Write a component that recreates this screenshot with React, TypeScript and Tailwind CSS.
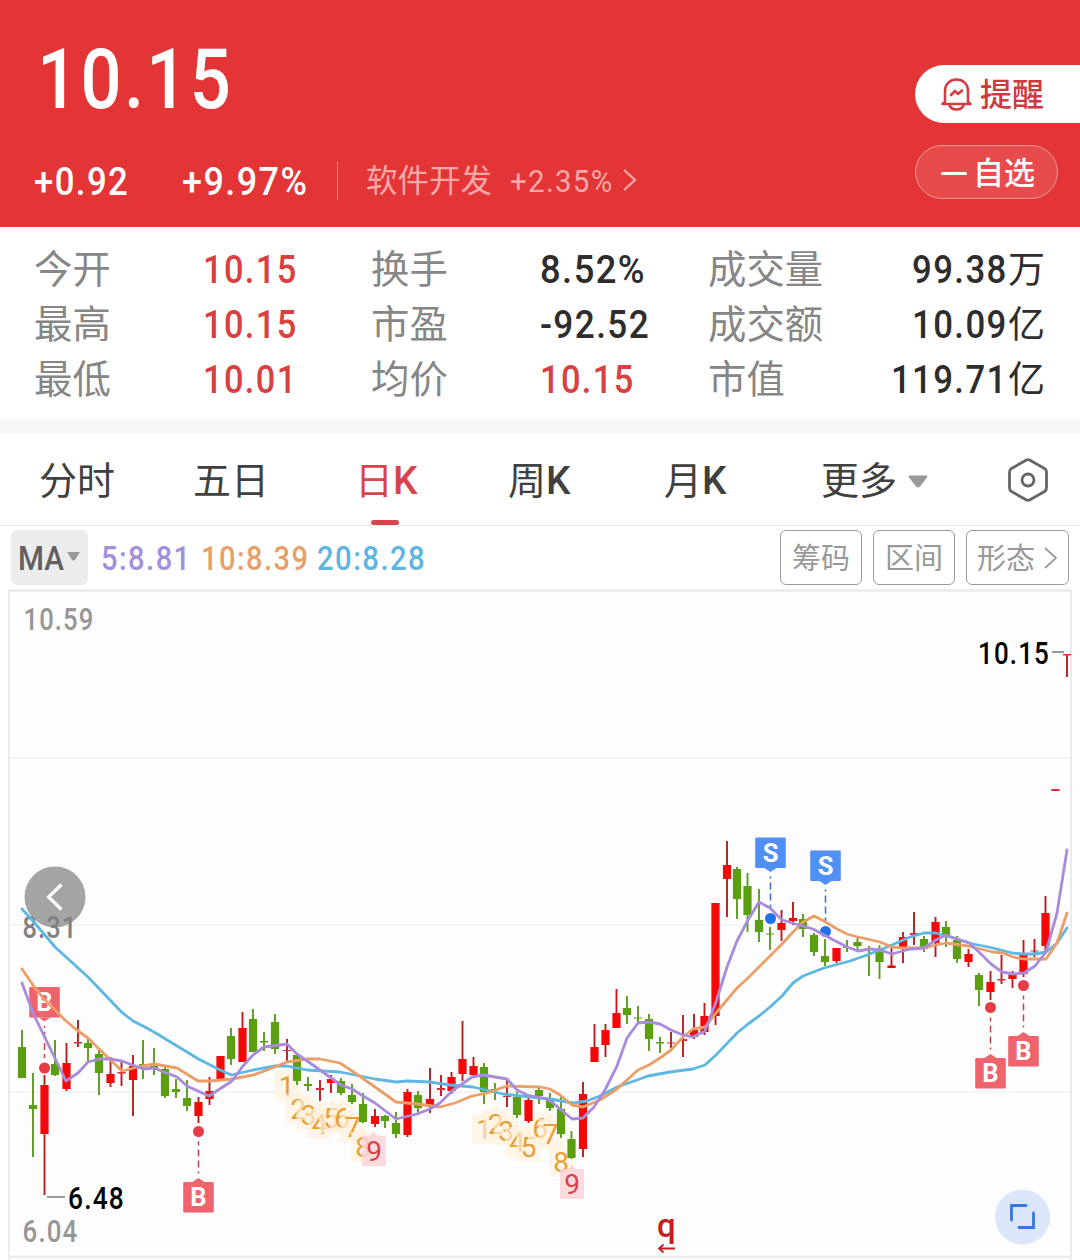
import React from "react";

type Candle = [number, number, number, number, number, 0 | 1];
type Point = [number, number];

const UP = 1;
const DOWN = 0;

// x, high, body top, body bottom, low, direction
const candles: Candle[] = [
  [22, 1030, 1047, 1078, 1078, DOWN], [33, 1073, 1105, 1109, 1157, DOWN], [44.5, 1075, 1085, 1134, 1195, UP],
  [55, 1040, 1064, 1075, 1076, DOWN], [66.5, 1043, 1063, 1089, 1091, UP], [78, 1020, 1042, 1043.5, 1047, UP],
  [88, 1039, 1043, 1048, 1061, DOWN], [99, 1049, 1054, 1073, 1095, DOWN], [110.5, 1057, 1074, 1083, 1087, UP],
  [121.5, 1062, 1072, 1073.5, 1086, UP], [133, 1055, 1066, 1080, 1116, UP], [143, 1040, 1064, 1066, 1079, DOWN],
  [154, 1048, 1066, 1068, 1075, DOWN], [165, 1067, 1069, 1096, 1098, DOWN], [176, 1079, 1089, 1092, 1098, DOWN],
  [187, 1080, 1098, 1106, 1111, DOWN], [198.5, 1097, 1102, 1116, 1123, UP], [209.5, 1077, 1091, 1099, 1105, UP],
  [220.5, 1056, 1056, 1079, 1079, UP], [231, 1028, 1036, 1059, 1065, DOWN], [242.5, 1012, 1028, 1062, 1062, UP],
  [253, 1009, 1019, 1052, 1052, DOWN], [264, 1032, 1041, 1042.5, 1051, DOWN], [275, 1014, 1022, 1049, 1054, DOWN],
  [287, 1039, 1050, 1051, 1061, UP], [297, 1053, 1055, 1081, 1085, DOWN], [308, 1077, 1084, 1086, 1091, DOWN],
  [320, 1080, 1088, 1090, 1101, UP], [331, 1075, 1079, 1083, 1093, UP], [341, 1078, 1081, 1093, 1095, DOWN],
  [352, 1084, 1095, 1102, 1104, DOWN], [363, 1093, 1104, 1122, 1123, DOWN], [375, 1109, 1116, 1124, 1127, UP],
  [385, 1115, 1116, 1121, 1128, DOWN], [396, 1112, 1123, 1134, 1138, DOWN], [407.5, 1089, 1092, 1135, 1137, UP],
  [418, 1091, 1095, 1108, 1114, DOWN], [430, 1068, 1099, 1107, 1113, UP], [441, 1075, 1088, 1090, 1096, UP],
  [451.5, 1072, 1077, 1091, 1094, UP], [462.5, 1021, 1059, 1074, 1081, UP], [473.5, 1057, 1066, 1075, 1077, UP],
  [484, 1063, 1067, 1092, 1104, DOWN], [495, 1083, 1089, 1090, 1100, DOWN], [507, 1078, 1096, 1097, 1107, UP],
  [517, 1092, 1097, 1115, 1118, DOWN], [528.5, 1098, 1100, 1121, 1123, UP], [539, 1088, 1090, 1096, 1104, DOWN],
  [550, 1093, 1098, 1108, 1111, DOWN], [561, 1097, 1109, 1134, 1138, DOWN], [571.5, 1131, 1139, 1158, 1159, DOWN],
  [583, 1082, 1094, 1149, 1157, UP], [594.5, 1024, 1047, 1062, 1062, UP], [605.5, 1024, 1030, 1045, 1057, UP],
  [616.5, 989, 1013, 1028, 1028, UP], [627, 996, 1008, 1015, 1024, DOWN], [638, 1006, 1017.5, 1018.5, 1023, DOWN],
  [649, 1014, 1019, 1039, 1051, DOWN], [660, 1037, 1042, 1043.5, 1053, DOWN], [671, 1032, 1042.5, 1043.5, 1048, UP],
  [683, 1015, 1039, 1041, 1057, UP], [694, 1014, 1030, 1037, 1039, UP], [704.5, 1003, 1016, 1032, 1035, UP],
  [715.5, 903, 903, 1016, 1025, UP], [727, 841, 865, 879, 917, UP], [737, 867, 869, 899, 919, DOWN],
  [747.5, 873, 886, 915, 932, DOWN], [759, 889, 920, 932, 942, DOWN], [770, 927, 933.5, 934.5, 950, DOWN],
  [781.5, 910, 923, 930, 941, UP], [793, 902, 918, 921, 925, UP], [803, 914, 919, 929, 937, DOWN],
  [814, 933, 935, 952, 956, DOWN], [825, 939, 956, 962, 966, DOWN], [836.5, 948, 948, 961, 963, UP],
  [847, 940, 947, 948, 952, DOWN], [857.5, 938, 942, 946, 950, DOWN], [869, 946, 948, 949, 976, DOWN],
  [879.5, 945, 952, 962, 979, DOWN], [891.5, 948, 965.5, 968, 968, UP], [903, 932, 937, 949, 963, UP],
  [914, 912, 933, 935, 945, UP], [924, 936, 939, 949, 952, DOWN], [935.5, 917, 922, 943, 957, UP],
  [946, 921, 927, 937, 947, DOWN], [957, 936, 940, 959, 963, DOWN], [968.5, 949, 954, 962, 967, UP],
  [979, 973, 975, 990, 1006, DOWN], [990.5, 971, 982, 992, 1000, UP], [1001.5, 955, 979, 980.5, 984, UP],
  [1012.5, 971, 975, 979, 988, UP], [1023.5, 940, 955, 974, 977, UP], [1034.5, 939, 950.5, 951.5, 957, UP],
  [1045.5, 896, 913, 946, 952, UP], [1055.5, 789, 789, 791, 791, UP], [1067, 654, 654, 655.5, 677, UP],
];

const ma20: Point[] = [
  [22, 909], [33, 921], [55, 947], [88, 977], [121.5, 1012], [133, 1021], [143, 1026], [154, 1032], [198.5, 1059],
  [220, 1070], [231.5, 1075], [253, 1070], [275, 1066], [287, 1066], [307, 1070], [340, 1072], [375, 1079], [396, 1082],
  [407, 1081], [430, 1082], [450, 1085], [473, 1087], [503, 1094], [530, 1097], [550, 1099], [573, 1103], [587, 1101],
  [600, 1096], [617, 1087], [637, 1080], [648, 1076], [670, 1072], [693, 1069], [705, 1065], [716, 1055], [737, 1033],
  [748, 1024], [759, 1016], [770, 1007], [782, 996], [793, 983], [803, 976], [824, 968], [850, 961], [867, 955],
  [880, 950], [892, 945], [910, 937], [924, 933], [936, 933], [957, 939], [973, 944], [993, 948], [1012, 953],
  [1023, 954], [1035, 954], [1046, 952], [1057, 943], [1067, 928],
];

const ma10: Point[] = [
  [22, 969], [33, 985], [43, 998], [66, 1021], [78, 1031], [88, 1038], [99, 1049], [122, 1071], [138, 1067], [154, 1064],
  [177, 1068], [198, 1081], [210, 1081], [232, 1079], [253, 1075], [267, 1070], [287, 1062], [307, 1059], [320, 1059],
  [340, 1063], [352, 1071], [375, 1087], [396, 1102], [417, 1104], [440, 1107], [455, 1103], [472, 1096], [487, 1093],
  [507, 1086], [540, 1087], [550, 1089], [560, 1095], [572, 1105], [583, 1107], [600, 1100], [617, 1089], [638, 1070],
  [649, 1065], [660, 1058], [671, 1050], [683, 1037], [693, 1029], [705, 1027], [716, 1013], [737, 988], [748, 978],
  [770, 956], [782, 944], [793, 932], [803, 922], [814, 916], [824, 921], [837, 929], [847, 934], [858, 937], [880, 942],
  [892, 947], [903, 948], [924, 948], [936, 945], [946, 943], [968, 946], [993, 952], [1003, 953], [1013, 957],
  [1023, 959], [1046, 959], [1057, 943], [1067, 913],
];

const ma5: Point[] = [
  [22, 983], [33, 1013], [66, 1081], [78, 1073], [88, 1062], [99, 1059], [110, 1059], [122, 1061], [143, 1069],
  [154, 1068], [177, 1077], [187, 1086], [200, 1092], [209, 1096], [232, 1081], [243, 1066], [253, 1055], [264, 1047],
  [287, 1044], [297, 1054], [320, 1070], [341, 1085], [352, 1089], [363, 1096], [375, 1103], [396, 1119], [417, 1114],
  [430, 1109], [440, 1103], [452, 1091], [472, 1077], [483, 1075], [507, 1079], [517, 1090], [527, 1095], [547, 1099],
  [553, 1103], [572, 1119], [583, 1118], [594, 1107], [605, 1090], [617, 1066], [627, 1038], [638, 1023], [649, 1022],
  [660, 1024], [671, 1030], [683, 1035], [693, 1037], [705, 1031], [716, 1002], [727, 967], [737, 941], [748, 920],
  [759, 902], [770, 908], [782, 920], [813, 929], [824, 935], [847, 947], [858, 951], [870, 949], [880, 950], [892, 954],
  [910, 949], [924, 948], [936, 940], [946, 935], [957, 939], [969, 943], [979, 952], [991, 964], [1002, 972],
  [1013, 974], [1024, 973], [1035, 966], [1046, 952], [1057, 913], [1067, 850],
];

// nine-turn sequence labels: x, centre y, digit
const sequence: [number, number, string][] = [
  [286.5, 1086, "1"], [298, 1109, "2"], [308.5, 1115, "3"], [319.5, 1124, "4"], [331, 1118, "5"], [342, 1118, "6"],
  [352.5, 1127, "7"], [363, 1147, "8"], [374, 1151, "9"],
  [484, 1129, "1"], [495.5, 1124, "2"], [506, 1131, "3"], [517, 1142, "4"], [528.5, 1147, "5"], [540, 1128, "6"],
  [550.5, 1134, "7"], [561, 1162, "8"], [572, 1184, "9"],
];

// trade markers: x, dot y, direction of the badge from the dot
const trades: { x: number; dot: number; dir: 1 | -1; kind: "B" | "S" }[] = [
  { x: 44.5, dot: 1068, dir: -1, kind: "B" },
  { x: 198.5, dot: 1131.5, dir: 1, kind: "B" },
  { x: 770.5, dot: 918.5, dir: -1, kind: "S" },
  { x: 825.5, dot: 931.5, dir: -1, kind: "S" },
  { x: 990.5, dot: 1007.5, dir: 1, kind: "B" },
  { x: 1023.5, dot: 985.5, dir: 1, kind: "B" },
];

const path = (pts: Point[]) => "M" + pts.map((p) => p.join(" ")).join("L");

function Num({ children, className = "" }: { children: React.ReactNode; className?: string }) {
  return (
    <span className={`inline-block whitespace-nowrap font-['Roboto',sans-serif] ${className}`}>
      {children}
    </span>
  );
}

function Label({ x, y, w, size, fill, children }: { x: number; y: number; w: number; size: number; fill: string; children: string }) {
  return (
    <text x={x} y={y} textLength={w} lengthAdjust="spacingAndGlyphs" fontSize={size} fill={fill} className="font-['Roboto',sans-serif] font-[470] tracking-[0.045em]">
      {children}
    </text>
  );
}

function Trade({ x, dot, dir, kind }: { x: number; dot: number; dir: 1 | -1; kind: "B" | "S" }) {
  const sell = kind === "S";
  const fill = sell ? "#5090f5" : "#ee636c";
  const tip = dot + dir * 46.5;
  const base = tip + dir * 4;
  const top = dir === 1 ? base : base - 30.5;
  return (
    <g>
      <line x1={x} x2={x} y1={dot + dir * 10} y2={dot + dir * 42} stroke={sell ? "#3d6cb5" : "#bd4650"} strokeWidth="1.5" strokeDasharray="7 4" strokeDashoffset="3" />
      <rect x={x - 15.3} y={top} width="30.6" height="30.5" rx="1.2" fill={fill} />
      <path d={`M${x - 6} ${base}L${x} ${tip}L${x + 6} ${base}Z`} fill={fill} />
      <text x={x} y={top + 24} textAnchor="middle" fontSize="25.5" fill="#fff" className="font-['Roboto',sans-serif] font-bold">
        {kind}
      </text>
      <circle cx={x} cy={dot} r="5.5" fill={sell ? "#2270ee" : "#e53c47"} />
    </g>
  );
}

function Sequence({ x, y, n }: { x: number; y: number; n: string }) {
  const last = n === "9";
  return (
    <g>
      <path
        d={`M${x - 12} ${y - 15}H${x - 4}L${x} ${y - 19}L${x + 4} ${y - 15}H${x + 12}V${y + 15}H${x - 12}Z`}
        fill={last ? "#fbd3d8" : "#fff0dd"}
        fillOpacity={last ? 0.85 : 0.68}
      />
      <text x={x} y={y + 10} textAnchor="middle" fontSize="28" fill={last ? "#d5414c" : "#e6a034"} className="font-['Roboto',sans-serif] font-[450]">
        {n}
      </text>
    </g>
  );
}

function Chart() {
  return (
    <svg className="block h-[672px] w-[1080px]" viewBox="0 588 1080 672">
      <rect x="10" y="592" width="1060" height="664" fill="#fdfdfd" />
      <g stroke="#f2f2f2" strokeWidth="1.5">
        <path d="M10 758H1070M10 925H1070M10 1092H1070" />
      </g>
      <path d="M9 1260V590.5H1071V1260" fill="none" stroke="#ebebeb" strokeWidth="2" />
      <path d="M8 590.5H1072M8 1257H1072" stroke="#ebebeb" strokeWidth="2.5" />
      <Label x={23.5} y={630} w={71} size={30.5} fill="#969696">10.59</Label>
      <Label x={22.5} y={1241.5} w={56} size={30.5} fill="#969696">6.04</Label>

      <circle cx="55" cy="897" r="30.5" fill="#a4a4a4" />
      <path d="M61.5 884.5L48.5 897L61.5 909.5" fill="none" stroke="#fff" strokeWidth="3.2" />
      <Label x={22.5} y={938} w={55} size={30.5} fill="#808080">8.31</Label>

      {sequence.map(([x, y, n]) => (
        <Sequence key={`${x}`} x={x} y={y} n={n} />
      ))}
      {candles.map(([x, hi, top, bottom, lo, up]) => {
        const thin = bottom - top < 2.2;
        return (
          <g key={x}>
            <line x1={x} x2={x} y1={hi} y2={lo} stroke={up ? "#b81c1f" : "#5b9a1f"} strokeWidth="1.9" />
            <rect x={x - 4.1} y={top} width="8.2" height={bottom - top} fill={up ? (thin ? "#d63136" : "#f50808") : "#599f10"} />
          </g>
        );
      })}
      {trades.map((t) => (
        <Trade key={t.x} {...t} />
      ))}
      <g fill="none" strokeWidth="2.8" strokeLinejoin="round" strokeLinecap="round">
        <path d={path(ma20)} stroke="#5eb7e3" />
        <path d={path(ma10)} stroke="#ea9f68" />
        <path d={path(ma5)} stroke="#a98bdb" />
      </g>

      <path d="M47 1197H65M1052 652H1064" stroke="#777" strokeWidth="1.6" />
      <Label x={68} y={1209} w={57} size={30.5} fill="#000">6.48</Label>
      <Label x={978} y={664} w={72} size={30.5} fill="#000">10.15</Label>

      <text x="657" y="1237" fontSize="33" fill="#c4201f" className="font-['Roboto',sans-serif] font-medium">q</text>
      <path d="M659 1248.5H675M663.5 1244.5L659 1248.5L663.5 1252.5" fill="none" stroke="#c4201f" strokeWidth="1.8" />

      <circle cx="1022.5" cy="1217" r="27.5" fill="#dce6fb" />
      <path d="M1011.5 1220V1205.500H1026M1033.500 1213V1227.500H1019" fill="none" stroke="#3876dc" strokeWidth="2.8" strokeLinecap="round" />
    </svg>
  );
}

type Value = { text: string; className: string };

const plain = "text-[#2d2d2d] scale-x-[0.89]";
const percent = "text-[#2d2d2d] scale-x-[0.92]";
const red = "text-[#d9403f] scale-x-[0.87]";

const stats: { a: string; av: Value; b: string; bv: Value; c: string; cv: string; unit: string }[] = [
  { a: "今开", av: { text: "10.15", className: red }, b: "换手", bv: { text: "8.52%", className: percent }, c: "成交量", cv: "99.38", unit: "万" },
  { a: "最高", av: { text: "10.15", className: red }, b: "市盈", bv: { text: "-92.52", className: plain }, c: "成交额", cv: "10.09", unit: "亿" },
  { a: "最低", av: { text: "10.01", className: red }, b: "均价", bv: { text: "10.15", className: red }, c: "市值", cv: "119.71", unit: "亿" },
];

export default function App() {
  return (
    <div className="h-[1260px] w-[1080px] overflow-hidden bg-white font-['Noto_Sans_CJK_SC',sans-serif]">
      <header className="flex h-[227px] justify-between bg-[#e33536] text-white">
        <div className="flex flex-col">
          <Num className="mt-[30px] ml-[37px] h-[100px] origin-left scale-x-[0.86] text-[84px] leading-[100px] font-medium tracking-[0.033em]">10.15</Num>
          <div className="mt-[27px] flex h-[50px] items-center">
            <div className="ml-[34px] w-[148px]">
              <Num className="origin-left scale-x-[0.88] text-[39.5px] leading-[50px] font-medium tracking-[0.04em]">+0.92</Num>
            </div>
            <div className="w-[155px]">
              <Num className="origin-left scale-x-[0.91] text-[39.5px] leading-[50px] font-medium tracking-[0.04em]">+9.97%</Num>
            </div>
            <div className="mb-[3px] h-[38px] w-px bg-[#f08a8b]" />
            <div className="mb-[8px] ml-[28px] w-[144px] text-[31.5px] leading-[50px] text-[#f9a8a8]">软件开发</div>
            <div className="mb-[2px] w-[113px] text-[#f9a8a8]">
              <Num className="origin-left scale-x-[0.92] text-[32px] leading-[50px] font-[450] tracking-[0.045em]">+2.35%</Num>
            </div>
            <svg className="mb-[4px] h-[24px] w-[14px]" viewBox="0 0 14 24" fill="none" stroke="#f9a8a8" strokeWidth="2.2">
              <path d="M1 2L12 12L1 22" />
            </svg>
          </div>
        </div>
        <div className="flex w-[165px] flex-col pt-[65px]">
          <div className="flex h-[58px] items-center rounded-l-full bg-white pl-[25px] text-[32px] font-medium text-[#cf3a40]">
            <svg className="mr-[7px] h-[34px] w-[33px]" viewBox="0 0 33 34" fill="none" stroke="#d43c44" strokeWidth="2.6" strokeLinecap="round" strokeLinejoin="round">
              <path d="M5 25V14C5 7 10 2.500 16.500 2.500S28 7 28 14V25L30.500 27H2.500Z" />
              <path d="M9.500 28C10.500 31.200 13 32.500 16.500 32.500S22.500 31.200 23.500 28" />
              <path d="M11 18L15 14L18 17L22 13.500" />
            </svg>
            <span className="mb-[5px] leading-none">提醒</span>
          </div>
          <div className="mt-[22px] flex h-[54px] w-[143px] items-center rounded-full border border-[#f19a9a] bg-[#e74b4c] pl-[25px] text-[31px] font-medium">
            <span className="mt-[2px] mr-[6px] h-[3px] w-[26px] rounded-full bg-white" />
            <span className="mb-[4px] leading-none">自选</span>
          </div>
        </div>
      </header>

      <section className="flex h-[193px] flex-col pt-[15px]">
        {stats.map(({ a, av, b, bv, c, cv, unit }) => (
          <div key={a} className="flex h-[55px] items-center text-[38.4px] leading-[55px] text-[#868686]">
            <div className="mb-[6px] ml-[34px] w-[169px]">{a}</div>
            <div className="flex w-[168px]">
              <Num className={`origin-left text-[39.5px] font-medium tracking-[0.04em] ${av.className}`}>{av.text}</Num>
            </div>
            <div className="mb-[6px] w-[169px]">{b}</div>
            <div className="flex w-[168px]">
              <Num className={`origin-left text-[39.5px] font-medium tracking-[0.04em] ${bv.className}`}>{bv.text}</Num>
            </div>
            <div className="mb-[6px] w-[140px]">{c}</div>
            <div className="flex w-[197px] items-center justify-end text-[#2d2d2d]">
              <Num className="origin-right scale-x-[0.88] text-[39.5px] font-medium tracking-[0.04em]">{cv}</Num>
              <span className="mb-[4px] text-[37px]">{unit}</span>
            </div>
          </div>
        ))}
      </section>
      <div className="h-[14px] bg-[#f7f7f7]" />

      <nav className="flex h-[92px] items-stretch border-b border-[#e8e8e8] text-[38px] leading-[88px] text-[#404040]">
        <div className="ml-[39px] w-[154px]">分时</div>
        <div className="w-[162px]">五日</div>
        <div className="relative w-[153px] text-[#d9434b]">
          日<Num className="origin-left scale-x-[1.02] font-[470]">K</Num>
          <div className="absolute bottom-0 left-[16px] h-[5px] w-[28px] rounded-full bg-[#d9434b]" />
        </div>
        <div className="w-[156px]">周<Num className="origin-left scale-x-[1.02] font-[470]">K</Num></div>
        <div className="w-[157px]">月<Num className="origin-left scale-x-[1.02] font-[470]">K</Num></div>
        <div className="flex w-[185px]">
          更多
          <svg className="mt-[41px] ml-[11px] h-[13px] w-[20px]" viewBox="0 0 20 13" fill="#999"><path d="M1.500 0.500H18.500Q20 1 19 2.500L12 11.500Q10 13.500 8 11.500L1 2.500Q0 1 1.500 0.500Z" /></svg>
        </div>
        <svg className="mt-[23px] h-[46px] w-[44px]" viewBox="0 0 44 46" fill="none" stroke="#666" strokeWidth="2.8" strokeLinejoin="round">
          <path d="M20 3.200Q22 2 24 3.200L38.500 11.500Q40.500 12.700 40.500 15V31Q40.500 33.300 38.500 34.500L24 42.800Q22 44 20 42.800L5.500 34.500Q3.500 33.300 3.500 31V15Q3.500 12.700 5.500 11.500Z" />
          <circle cx="22" cy="23" r="6" />
        </svg>
      </nav>

      <div className="flex h-[62px] items-start pt-[4px]">
        <div className="ml-[11px] flex h-[55px] w-[77px] items-center rounded-[6px] bg-[#ececec] pl-[7px] text-[33px] text-[#606060]">
          <Num className="mt-[2px] w-[49px] origin-left scale-x-[0.9] font-[470]">MA</Num>
          <svg className="mt-[-3px] h-[9px] w-[13px]" viewBox="0 0 13 9" fill="#999"><path d="M0 0H13L8 8Q6.500 9 5 8Z" /></svg>
        </div>
        <div className="ml-[13px] flex h-[55px] items-center text-[32.5px] tracking-[0.05em]">
          <div className="w-[100px] text-[#a48fdc]"><Num className="origin-left scale-x-[0.895] font-[480]">5:8.81</Num></div>
          <div className="w-[116px] text-[#e8a06a]"><Num className="origin-left scale-x-[0.895] font-[480]">10:8.39</Num></div>
          <div className="w-[110px] text-[#5db5e0]"><Num className="origin-left scale-x-[0.9] font-[480]">20:8.28</Num></div>
        </div>
        <div className="mr-[11px] ml-auto flex gap-[11px] text-[29px] leading-[51px] text-[#989898]">
          <div className="h-[55px] w-[82px] rounded-[6px] border border-[#999] text-center">筹码</div>
          <div className="h-[55px] w-[82px] rounded-[6px] border border-[#999] text-center">区间</div>
          <div className="flex h-[55px] w-[103px] rounded-[6px] border border-[#999] pl-[10px]">
            形态
            <svg className="mt-[16px] ml-[9px] h-[22px] w-[13px]" viewBox="0 0 13 22" fill="none" stroke="#999" strokeWidth="1.8"><path d="M1 1L12 11L1 21" /></svg>
          </div>
        </div>
      </div>

      <Chart />
    </div>
  );
}
